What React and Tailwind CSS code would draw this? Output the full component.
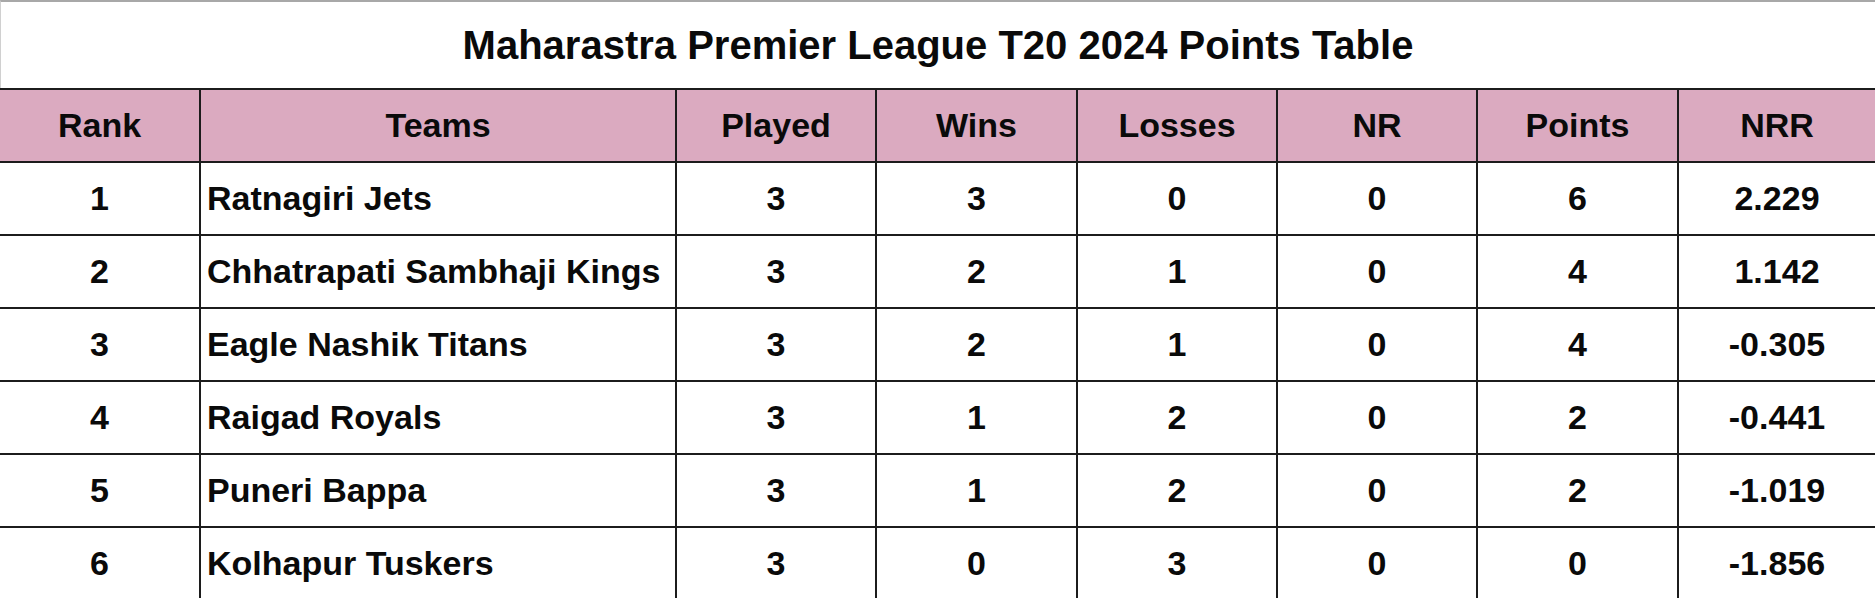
const columns = ["Rank", "Teams", "Played", "Wins", "Losses", "NR", "Points", "NRR"];

const rows = [
  [1, "Ratnagiri Jets", 3, 3, 0, 0, 6, "2.229"],
  [2, "Chhatrapati Sambhaji Kings", 3, 2, 1, 0, 4, "1.142"],
  [3, "Eagle Nashik Titans", 3, 2, 1, 0, 4, "-0.305"],
  [4, "Raigad Royals", 3, 1, 2, 0, 2, "-0.441"],
  [5, "Puneri Bappa", 3, 1, 2, 0, 2, "-1.019"],
  [6, "Kolhapur Tuskers", 3, 0, 3, 0, 0, "-1.856"],
];

const grid =
  "grid grid-cols-[199px_476px_200px_201px_200px_200px_201px_198px] h-[73px] border-t-2 border-[#1c1c1c] text-[34px]";

function Cell({ children, index, left }) {
  return (
    <div
      className={
        "flex items-center h-full " +
        (index > 0 ? "border-l-2 border-[#1c1c1c] " : "") +
        (left ? "justify-start pl-[6px]" : "justify-center")
      }
    >
      {children}
    </div>
  );
}

export default function App() {
  return (
    <div
      className="w-[1875px] h-[598px] overflow-hidden bg-white text-[#0a0a0a] font-bold"
      style={{ fontFamily: '"Liberation Sans", Arial, sans-serif' }}
    >
      <div className="h-[88px] flex items-center justify-center border-t-2 border-t-[#a8a8a8] border-l border-l-[#d0d0d0]">
        <h1 className="text-[40px] leading-none">
          Maharastra Premier League T20 2024 Points Table
        </h1>
      </div>

      <div className={grid + " bg-[#dbaac0]"}>
        {columns.map((c, i) => (
          <Cell key={c} index={i}>
            {c}
          </Cell>
        ))}
      </div>

      {rows.map((r) => (
        <div key={r[0]} className={grid}>
          {r.map((v, i) => (
            <Cell key={i} index={i} left={i === 1}>
              {v}
            </Cell>
          ))}
        </div>
      ))}
    </div>
  );
}
